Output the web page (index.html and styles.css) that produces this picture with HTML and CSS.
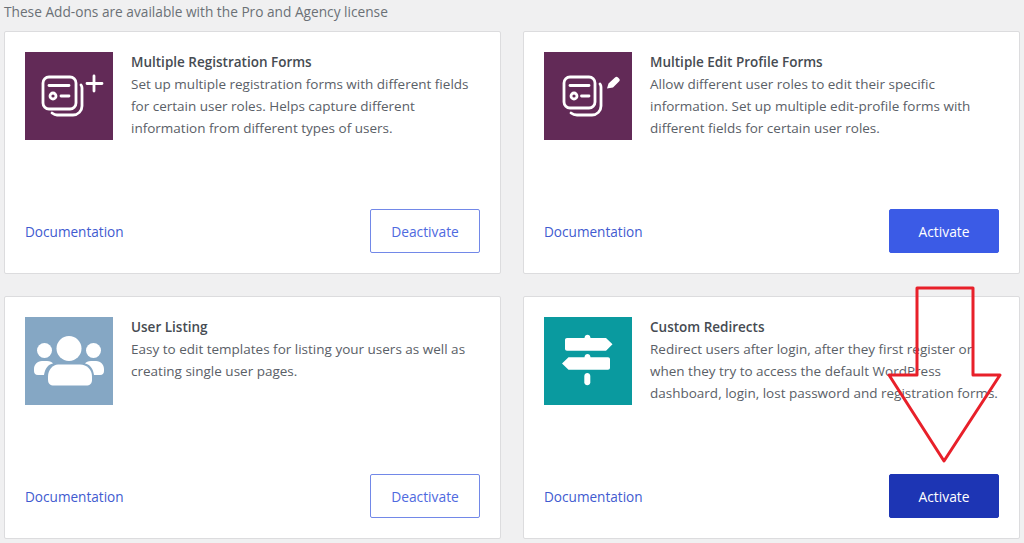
FILE: index.html
```html
<!DOCTYPE html>
<html lang="en">
<head>
  <meta charset="UTF-8" />
  <title>Add-ons</title>
  <link rel="stylesheet" href="styles.css">
</head>
<body>
  <div class="page">
    <p class="intro">These Add-ons are available with the Pro and Agency license</p>

    <div class="addons">
      <!-- Multiple Registration Forms -->
      <div class="card">
        <div class="card-top">
          <div class="icon icon-purple">
            <svg viewBox="0 0 88 88" width="88" height="88" fill="none" stroke="#fff" stroke-width="2.800" stroke-linecap="round" stroke-linejoin="round">
              <rect x="18" y="25" width="33" height="32" rx="6"/>
              <path d="M24 33.500h20"/>
              <circle cx="28" cy="44" r="3"/>
              <path d="M36 44h8"/>
              <path d="M56 33c.7 1 1 2 1 3v18c0 5-4 9-9 9H32c-2 0-3-.5-5-2"/>
              <path d="M69 24v15M62 31.500h15"/>
            </svg>
          </div>
          <div class="info">
            <h3>Multiple Registration Forms</h3>
            <p>Set up multiple registration forms with different fields for certain user roles. Helps capture different information from different types of users.</p>
          </div>
        </div>
        <div class="card-bottom">
          <a class="doc-link">Documentation</a>
          <button class="btn btn-outline">Deactivate</button>
        </div>
      </div>

      <!-- Multiple Edit Profile Forms -->
      <div class="card">
        <div class="card-top">
          <div class="icon icon-purple">
            <svg viewBox="0 0 88 88" width="88" height="88" fill="none" stroke="#fff" stroke-width="2.800" stroke-linecap="round" stroke-linejoin="round">
              <rect x="20" y="25" width="31" height="31" rx="6"/>
              <path d="M26 33.500h19"/>
              <circle cx="30" cy="44" r="3"/>
              <path d="M37.500 44h7.500"/>
              <path d="M56 32c.7 1 1 2 1 3v19c0 5-4 9-9 9H33c-2 0-4-.5-6-2"/>
              <path d="M63 36.500l1.500-5 6.500-6c1-1 2-1 3 0l1 1c1 1 1 2 0 3l-6 6z" fill="#fff" stroke="none"/>
            </svg>
          </div>
          <div class="info">
            <h3>Multiple Edit Profile Forms</h3>
            <p>Allow different user roles to edit their specific information. Set up multiple edit-profile forms with different fields for certain user roles.</p>
          </div>
        </div>
        <div class="card-bottom">
          <a class="doc-link">Documentation</a>
          <button class="btn btn-solid">Activate</button>
        </div>
      </div>

      <!-- User Listing -->
      <div class="card">
        <div class="card-top">
          <div class="icon icon-blue">
            <svg viewBox="0 0 88 88" width="88" height="88" fill="#fff">
              <circle cx="44" cy="31.500" r="12.500"/>
              <circle cx="19.500" cy="33.500" r="7.500"/>
              <circle cx="68.500" cy="33.500" r="7.500"/>
              <path d="M33 47.500h22c7 0 12 5 12 12v3c0 4-2 6-6 6H29c-4 0-6-2-6-6v-3c0-7 5-12 10-12z"/>
              <path d="M17 44h5c3 0 5 1 6 2.500-5 1-8 5-9 11.500h-6c-3 0-4-2-4-4v-2c0-4 3-8 8-8z"/>
              <path d="M71 44h-5c-3 0-5 1-6 2.500 5 1 8 5 9 11.500h6c3 0 4-2 4-4v-2c0-4-3-8-8-8z"/>
            </svg>
          </div>
          <div class="info">
            <h3>User Listing</h3>
            <p>Easy to edit templates for listing your users as well as creating single user pages.</p>
          </div>
        </div>
        <div class="card-bottom">
          <a class="doc-link">Documentation</a>
          <button class="btn btn-outline">Deactivate</button>
        </div>
      </div>

      <!-- Custom Redirects -->
      <div class="card">
        <div class="card-top">
          <div class="icon icon-teal">
            <svg viewBox="0 0 88 88" width="88" height="88" fill="#fff">
              <path d="M23 21h17.500c0-4.500 6-4.500 6 0H62l6.500 6.300-6.500 6.400H23c-1.200 0-2-.8-2-2V23c0-1.200.8-2 2-2z"/>
              <path d="M64 40.300H46.500c0-4.500-6-4.500-6 0H24.500L18 46.500l6.500 6.200H64c1.200 0 2-.8 2-2v-8.400c0-1.200-.8-2-2-2z"/>
              <path d="M40.300 59c0-4 6-4 6 0v6.300c0 4-6 4-6 0z"/>
            </svg>
          </div>
          <div class="info">
            <h3>Custom Redirects</h3>
            <p>Redirect users after login, after they first register or when they try to access the default WordPress dashboard, login, lost password and registration forms.</p>
          </div>
        </div>
        <div class="card-bottom">
          <a class="doc-link">Documentation</a>
          <button class="btn btn-solid btn-hover">Activate</button>
        </div>
      </div>
    </div>
  </div>

  <!-- Red arrow drawn over the last card -->
  <svg class="arrow" viewBox="0 0 1024 543" width="1024" height="543" fill="none" stroke="#e8202a" stroke-width="3" stroke-linejoin="round">
    <path d="M917 288H973V375H1000L944 461L889 375H917Z"/>
  </svg>
</body>
</html>
```

FILE: styles.css
```css
html, body {
  height: 543px;
  overflow: hidden;
}

body {
  margin: 0;
  background: #f0f0f1;
  font-family: 'Open Sans', sans-serif;
  color: #5a6067;
}

.page {
  padding: 0 4px;
}

.intro {
  margin: 0;
  padding-top: 2px;
  height: 31px;
  box-sizing: border-box;
  font-size: 13.7px;
  line-height: 20px;
  color: #6b7076;
}

.addons {
  display: grid;
  grid-template-columns: 497px 497px;
  grid-auto-rows: 243px;
  gap: 22px;
}

.card {
  background: #fff;
  border: 1px solid #dcdcde;
  border-radius: 2px;
  padding: 20px;
  display: flex;
  flex-direction: column;
  justify-content: space-between;
}

.card-top {
  display: flex;
  gap: 18px;
}

.icon {
  width: 88px;
  height: 88px;
  flex-shrink: 0;
}

.icon svg {
  display: block;
}

.icon-purple { background: #622a57; }
.icon-blue { background: #85a7c4; }
.icon-teal { background: #0a9a9f; }

.info h3 {
  margin: 0;
  font-size: 13.5px;
  font-weight: 600;
  line-height: 20px;
  color: #464b52;
}

.info p {
  margin: 1px 0 0;
  font-size: 13.5px;
  line-height: 22px;
}

.card-bottom {
  display: flex;
  justify-content: space-between;
  align-items: center;
}

.doc-link {
  font-size: 13.6px;
  color: #3f5bd0;
}

.btn {
  width: 110px;
  height: 44px;
  border-radius: 2px;
  font-family: inherit;
  font-size: 13.8px;
  cursor: pointer;
}

.btn-outline {
  background: #fff;
  border: 1px solid #7288e8;
  color: #4f6ae0;
}

.btn-solid {
  background: #3b5be6;
  border: 1px solid #3b5be6;
  color: #fff;
}

.btn-hover {
  background: #1d35b4;
  border-color: #1d35b4;
}

.arrow {
  position: absolute;
  left: 0;
  top: 0;
  pointer-events: none;
}
```
